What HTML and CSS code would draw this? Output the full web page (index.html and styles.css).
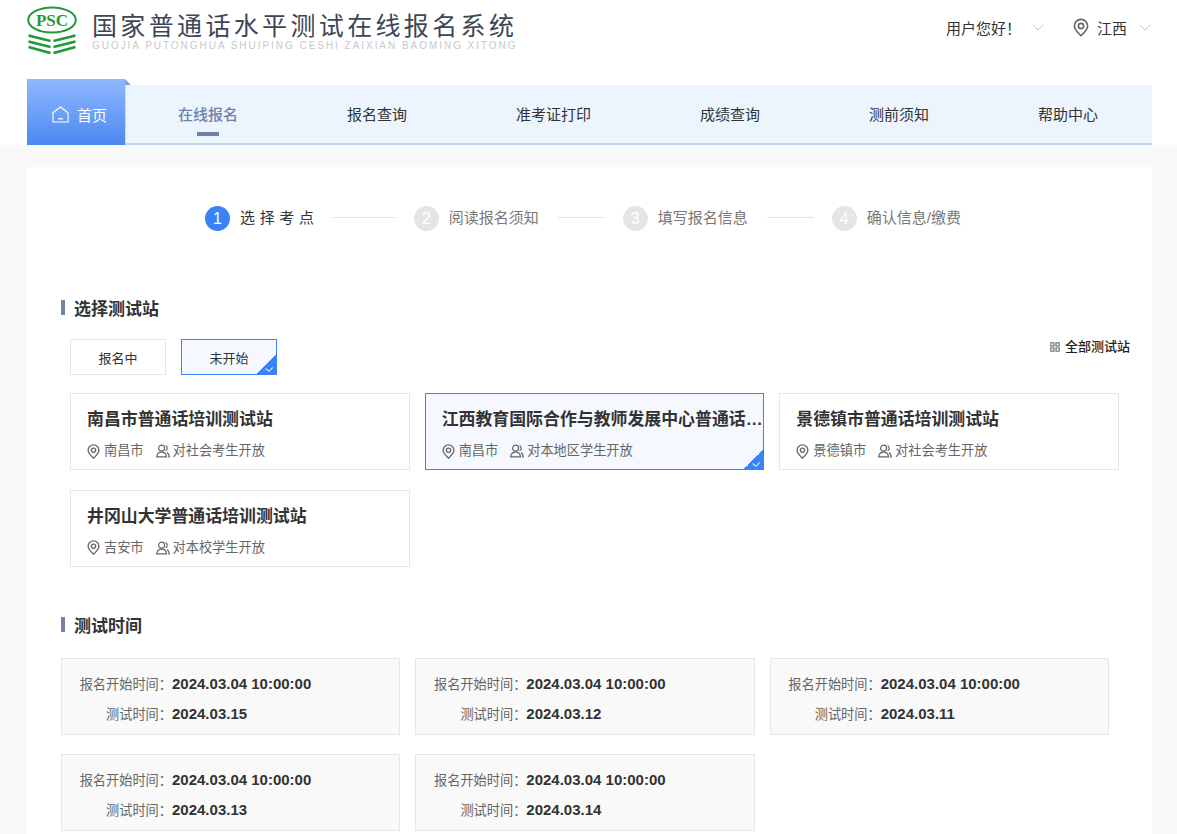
FILE: index.html
```html
<!DOCTYPE html>
<html lang="zh-CN">
<head>
    <meta charset="UTF-8">
    <meta name="viewport" content="width=device-width, initial-scale=1.0">
    <title>国家普通话水平测试在线报名系统</title>
    <link rel="stylesheet" href="styles.css">
</head>
<body>
    <svg class="icon-defs" width="0" height="0" aria-hidden="true">
        <symbol id="pin" viewBox="0 0 14 16">
            <path d="M7 15.200C4.200 12.600 1.200 10 1.200 6.700a5.800 5.800 0 0 1 11.600 0c0 3.300-3 5.900-5.800 8.500z" fill="none" stroke="currentColor" stroke-width="1.400"/>
            <circle cx="7" cy="6.700" r="2.300" fill="none" stroke="currentColor" stroke-width="1.400"/>
        </symbol>
        <symbol id="people" viewBox="0 0 14 14">
            <circle cx="5.600" cy="4.200" r="3" fill="none" stroke="currentColor" stroke-width="1.200"/>
            <path d="M.7 12.800c.3-2.900 2.300-4.600 4.900-4.600s4.600 1.700 4.900 4.600z" fill="none" stroke="currentColor" stroke-width="1.200"/>
            <path d="M9.600 1.500a3 3 0 0 1 0 5.300M11 8.600c1.300.7 2.100 2.200 2.300 4.200h-1.100" fill="none" stroke="currentColor" stroke-width="1.200"/>
        </symbol>
        <symbol id="chevron" viewBox="0 0 12 7">
            <path d="M.6.8 6 6 11.400.8" fill="none" stroke="currentColor" stroke-width="1"/>
        </symbol>
        <symbol id="tick" viewBox="0 0 10 8">
            <path d="M1.500 3.500 5 6.300 8.700 2.500" fill="none" stroke="currentColor" stroke-width="1.100"/>
        </symbol>
    </svg>

    <header class="site-header">
        <div class="top-bar">
            <div class="brand">
                <svg class="logo" viewBox="0 0 50 48" aria-hidden="true">
                    <ellipse cx="25" cy="14" rx="23.800" ry="12.600" fill="none" stroke="#1f9a36" stroke-width="2"/>
                    <text x="25" y="19.500" class="logo-text" text-anchor="middle">PSC</text>
                    <g fill="none" stroke="#1f9a36" stroke-width="2.800">
                        <path d="M1.500 29.500 23.500 35M48.500 29.500 26.500 35"/>
                        <path d="M1.500 35.500 23.500 41M48.500 35.500 26.500 41"/>
                        <path d="M1.500 41 23.500 47M48.500 41 26.500 47"/>
                    </g>
                </svg>
                <div class="brand-text">
                    <div class="brand-name">国家普通话水平测试在线报名系统</div>
                    <div class="brand-pinyin">GUOJIA PUTONGHUA SHUIPING CESHI ZAIXIAN BAOMING XITONG</div>
                </div>
            </div>
            <div class="user-area">
                <span class="user-name">用户您好！</span>
                <svg class="chevron"><use href="#chevron"/></svg>
                <svg class="region-pin"><use href="#pin"/></svg>
                <span class="region-name">江西</span>
                <svg class="chevron chevron-last"><use href="#chevron"/></svg>
            </div>
        </div>
        <nav class="main-nav">
            <a class="home-tab" href="#">
                <svg class="home-icon" viewBox="0 0 18 18" aria-hidden="true">
                    <path d="M1 7.200 9 1l8 6.200V17H1z" fill="none" stroke="currentColor" stroke-width="1.200"/>
                    <path d="M6.500 13.500h5" stroke="currentColor" stroke-width="1.400"/>
                </svg>
                首页
            </a>
            <div class="nav-links">
                <a class="nav-link active" href="#">在线报名</a>
                <a class="nav-link" href="#">报名查询</a>
                <a class="nav-link" href="#">准考证打印</a>
                <a class="nav-link" href="#">成绩查询</a>
                <a class="nav-link" href="#">测前须知</a>
                <a class="nav-link" href="#">帮助中心</a>
            </div>
        </nav>
    </header>

    <main class="panel">
        <div class="steps">
            <span class="step-num current">1</span>
            <span class="step-text current spaced">选择考点</span>
            <span class="step-line line-a"></span>
            <span class="step-num">2</span>
            <span class="step-text">阅读报名须知</span>
            <span class="step-line line-b"></span>
            <span class="step-num">3</span>
            <span class="step-text">填写报名信息</span>
            <span class="step-line line-b"></span>
            <span class="step-num">4</span>
            <span class="step-text">确认信息/缴费</span>
        </div>

        <h2 class="section-title first">选择测试站</h2>

        <div class="filter-row">
            <button class="filter-btn" type="button">报名中</button>
            <button class="filter-btn selected" type="button">未开始<span class="corner"><svg class="tick"><use href="#tick"/></svg></span></button>
            <a class="all-link" href="#">
                <svg class="grid-icon" viewBox="0 0 10 10" aria-hidden="true">
                    <g fill="none" stroke="#777" stroke-width="1.200">
                        <rect x=".8" y=".8" width="3.200" height="3.200"/>
                        <rect x="6" y=".8" width="3.200" height="3.200"/>
                        <rect x=".8" y="6" width="3.200" height="3.200"/>
                        <rect x="6" y="6" width="3.200" height="3.200"/>
                    </g>
                </svg>
                全部测试站
            </a>
        </div>

        <div class="site-grid">
            <div class="site-card">
                <div class="site-name">南昌市普通话培训测试站</div>
                <div class="site-meta">
                    <svg class="meta-pin"><use href="#pin"/></svg><span class="city">南昌市</span>
                    <svg class="meta-people"><use href="#people"/></svg><span>对社会考生开放</span>
                </div>
            </div>
            <div class="site-card selected">
                <div class="site-name">江西教育国际合作与教师发展中心普通话…</div>
                <div class="site-meta">
                    <svg class="meta-pin"><use href="#pin"/></svg><span class="city">南昌市</span>
                    <svg class="meta-people"><use href="#people"/></svg><span>对本地区学生开放</span>
                </div>
                <span class="corner"><svg class="tick"><use href="#tick"/></svg></span>
            </div>
            <div class="site-card">
                <div class="site-name">景德镇市普通话培训测试站</div>
                <div class="site-meta">
                    <svg class="meta-pin"><use href="#pin"/></svg><span class="city">景德镇市</span>
                    <svg class="meta-people"><use href="#people"/></svg><span>对社会考生开放</span>
                </div>
            </div>
            <div class="site-card">
                <div class="site-name">井冈山大学普通话培训测试站</div>
                <div class="site-meta">
                    <svg class="meta-pin"><use href="#pin"/></svg><span class="city">吉安市</span>
                    <svg class="meta-people"><use href="#people"/></svg><span>对本校学生开放</span>
                </div>
            </div>
        </div>

        <h2 class="section-title second">测试时间</h2>

        <div class="time-grid">
            <div class="time-card">
                <div class="time-row"><span class="time-label">报名开始时间：</span><span class="time-value">2024.03.04 10:00:00</span></div>
                <div class="time-row"><span class="time-label">测试时间：</span><span class="time-value">2024.03.15</span></div>
            </div>
            <div class="time-card">
                <div class="time-row"><span class="time-label">报名开始时间：</span><span class="time-value">2024.03.04 10:00:00</span></div>
                <div class="time-row"><span class="time-label">测试时间：</span><span class="time-value">2024.03.12</span></div>
            </div>
            <div class="time-card">
                <div class="time-row"><span class="time-label">报名开始时间：</span><span class="time-value">2024.03.04 10:00:00</span></div>
                <div class="time-row"><span class="time-label">测试时间：</span><span class="time-value">2024.03.11</span></div>
            </div>
            <div class="time-card">
                <div class="time-row"><span class="time-label">报名开始时间：</span><span class="time-value">2024.03.04 10:00:00</span></div>
                <div class="time-row"><span class="time-label">测试时间：</span><span class="time-value">2024.03.13</span></div>
            </div>
            <div class="time-card">
                <div class="time-row"><span class="time-label">报名开始时间：</span><span class="time-value">2024.03.04 10:00:00</span></div>
                <div class="time-row"><span class="time-label">测试时间：</span><span class="time-value">2024.03.14</span></div>
            </div>
        </div>
    </main>
</body>
</html>
```

FILE: styles.css
```css
:root {
    --blue: #3b82f6;
    --slate: #6e83aa;
    --text: #333;
    --muted: #666;
    --line: #e6e6e6;
}

* {
    margin: 0;
    padding: 0;
    box-sizing: border-box;
}

body {
    font-family: "Liberation Sans", "Noto Sans CJK SC", sans-serif;
    color: var(--text);
    background: #f9f9f9;
}

a {
    color: inherit;
    text-decoration: none;
}

.icon-defs {
    position: absolute;
}

/* header */
.site-header {
    height: 145px;
    padding: 0 25px 0 27px;
    background: #fff;
}

.top-bar {
    height: 79px;
    display: flex;
    justify-content: space-between;
    padding-right: 1px;
}

.brand {
    display: flex;
    padding-top: 6px;
}

.logo {
    width: 50px;
    height: 48px;
}

.logo-text {
    font-family: "Liberation Serif", serif;
    font-size: 17px;
    font-weight: 700;
    fill: #1f9a36;
}

.brand-text {
    margin-left: 15px;
}

.brand-name {
    font-size: 25px;
    line-height: 30px;
    margin-top: 5px;
    letter-spacing: 3.35px;
    white-space: nowrap;
    color: #3c4656;
}

.brand-pinyin {
    font-size: 10px;
    line-height: 12px;
    margin-top: -1px;
    letter-spacing: 1.96px;
    white-space: nowrap;
    color: #c6c9cd;
}

.user-area {
    display: flex;
    align-items: center;
    height: 55px;
    font-size: 15px;
}

.user-name {
    width: 66px;
    white-space: nowrap;
}

.chevron {
    width: 12px;
    height: 7px;
    margin-left: 20px;
    color: #c2c6cc;
}

.chevron-last {
    margin-left: 12px;
}

.region-pin {
    width: 16px;
    height: 19px;
    margin-left: 29px;
    margin-right: 8px;
    color: #666;
}

.main-nav {
    height: 66px;
    display: flex;
    align-items: flex-end;
}

.home-tab {
    position: relative;
    width: 98px;
    height: 66px;
    display: flex;
    align-items: center;
    justify-content: center;
    gap: 8px;
    padding: 4px 0 0 7px;
    font-size: 15px;
    color: #fff;
    background: linear-gradient(180deg, #8fb9ff 0%, #4c88f1 100%);
}

.home-tab::after {
    content: "";
    position: absolute;
    top: 0;
    left: 98px;
    border-style: solid;
    border-width: 6px 0 0 6px;
    border-color: transparent transparent transparent #7fa3dc;
}

.home-icon {
    width: 17px;
    height: 17px;
}

.nav-links {
    flex: 1;
    height: 60px;
    display: flex;
    align-items: center;
    gap: 109px;
    padding: 1px 0 0 52px;
    background: #ecf4fd;
    border-bottom: 2px solid #c4d4e7;
    border-left: 1px solid #c4dcfb;
}

.nav-link {
    position: relative;
    font-size: 15px;
    line-height: 58px;
    white-space: nowrap;
}

.nav-link.active {
    color: var(--slate);
    font-weight: 500;
}

.nav-link.active::after {
    content: "";
    position: absolute;
    left: 19px;
    bottom: 8px;
    width: 22px;
    height: 4px;
    background: var(--slate);
}

/* main panel */
.panel {
    width: 1125px;
    margin: 22px 0 40px 27px;
    padding: 38px 22px 30px 34px;
    background: #fff;
}

.steps {
    height: 26px;
    display: flex;
    align-items: center;
    padding-left: 144px;
}

.step-num {
    width: 25px;
    height: 25px;
    border-radius: 50%;
    background: #e5e5e5;
    color: #fff;
    font-size: 16px;
    line-height: 25px;
    text-align: center;
}

.step-num.current {
    background: var(--blue);
}

.step-text {
    margin: 0 0 4px 10px;
    font-size: 15px;
    color: #777;
    white-space: nowrap;
}

.step-text.current {
    color: var(--text);
}

.step-text.spaced {
    letter-spacing: 4.67px;
}

.step-line {
    height: 1px;
    margin-bottom: 2px;
    background: #e3e3e3;
}

.line-a {
    width: 63px;
    margin-left: 13px;
    margin-right: 19px;
}

.line-b {
    width: 47px;
    margin-left: 19px;
    margin-right: 18px;
}

.section-title {
    position: relative;
    height: 24px;
    padding-left: 13px;
    font-size: 17px;
    font-weight: 700;
    line-height: 26px;
}

.section-title::before {
    content: "";
    position: absolute;
    left: 0;
    top: 3px;
    width: 4px;
    height: 15px;
    background: var(--slate);
}

.section-title.first {
    margin-top: 66px;
}

.section-title.second {
    margin-top: 47.400px;
}

.filter-row {
    display: flex;
    align-items: flex-start;
    gap: 15px;
    margin: 18px 0 18px 9px;
}

.filter-btn {
    position: relative;
    width: 96px;
    height: 36px;
    font-family: inherit;
    font-size: 13px;
    color: var(--text);
    background: #fff;
    border: 1px solid var(--line);
}

.filter-btn.selected {
    background: #f5f8ff;
    border-color: var(--blue);
}

.all-link {
    margin-left: auto;
    display: flex;
    align-items: center;
    gap: 5px;
    font-size: 13px;
    font-weight: 500;
    line-height: 16px;
    color: #222;
}

.grid-icon {
    width: 10px;
    height: 10px;
}

.corner {
    position: absolute;
    right: -1px;
    bottom: -1px;
    width: 21px;
    height: 21px;
    background: linear-gradient(135deg, transparent 50%, var(--blue) 50%);
}

.tick {
    position: absolute;
    right: 3px;
    bottom: 2px;
    width: 10px;
    height: 8px;
    color: #cfe0fb;
}

.site-grid {
    display: grid;
    grid-template-columns: repeat(3, 1fr);
    gap: 19.600px 15px;
    margin: 0 11px 0 9px;
}

.site-card {
    position: relative;
    height: 77px;
    padding: 13px 0 0 16px;
    border: 1px solid var(--line);
    min-width: 0;
}

.site-card.selected {
    background: #f5f8ff;
    border-color: var(--blue);
}

.site-name {
    font-size: 16.900px;
    font-weight: 700;
    line-height: 26px;
    white-space: nowrap;
    overflow: hidden;
    text-overflow: ellipsis;
}

.site-meta {
    display: flex;
    align-items: center;
    margin-top: 8px;
    font-size: 13.200px;
    line-height: 20px;
    color: var(--muted);
}

.meta-pin {
    width: 13px;
    height: 15px;
    margin-right: 4px;
    color: #666;
}

.meta-people {
    width: 14px;
    height: 14px;
    margin: 0 3px 0 12px;
    color: #666;
}

.time-grid {
    display: grid;
    grid-template-columns: repeat(3, 1fr);
    gap: 19px 15px;
    margin: 20px 21px 0 0;
}

.time-card {
    height: 77px;
    padding-top: 10px;
    background: #f9f9f9;
    border: 1px solid var(--line);
}

.time-row {
    display: flex;
    align-items: center;
    height: 30px;
}

.time-label {
    width: 110px;
    font-size: 13.200px;
    text-align: right;
    color: var(--muted);
}

.time-value {
    font-size: 15px;
    font-weight: 700;
    color: var(--text);
}
```
